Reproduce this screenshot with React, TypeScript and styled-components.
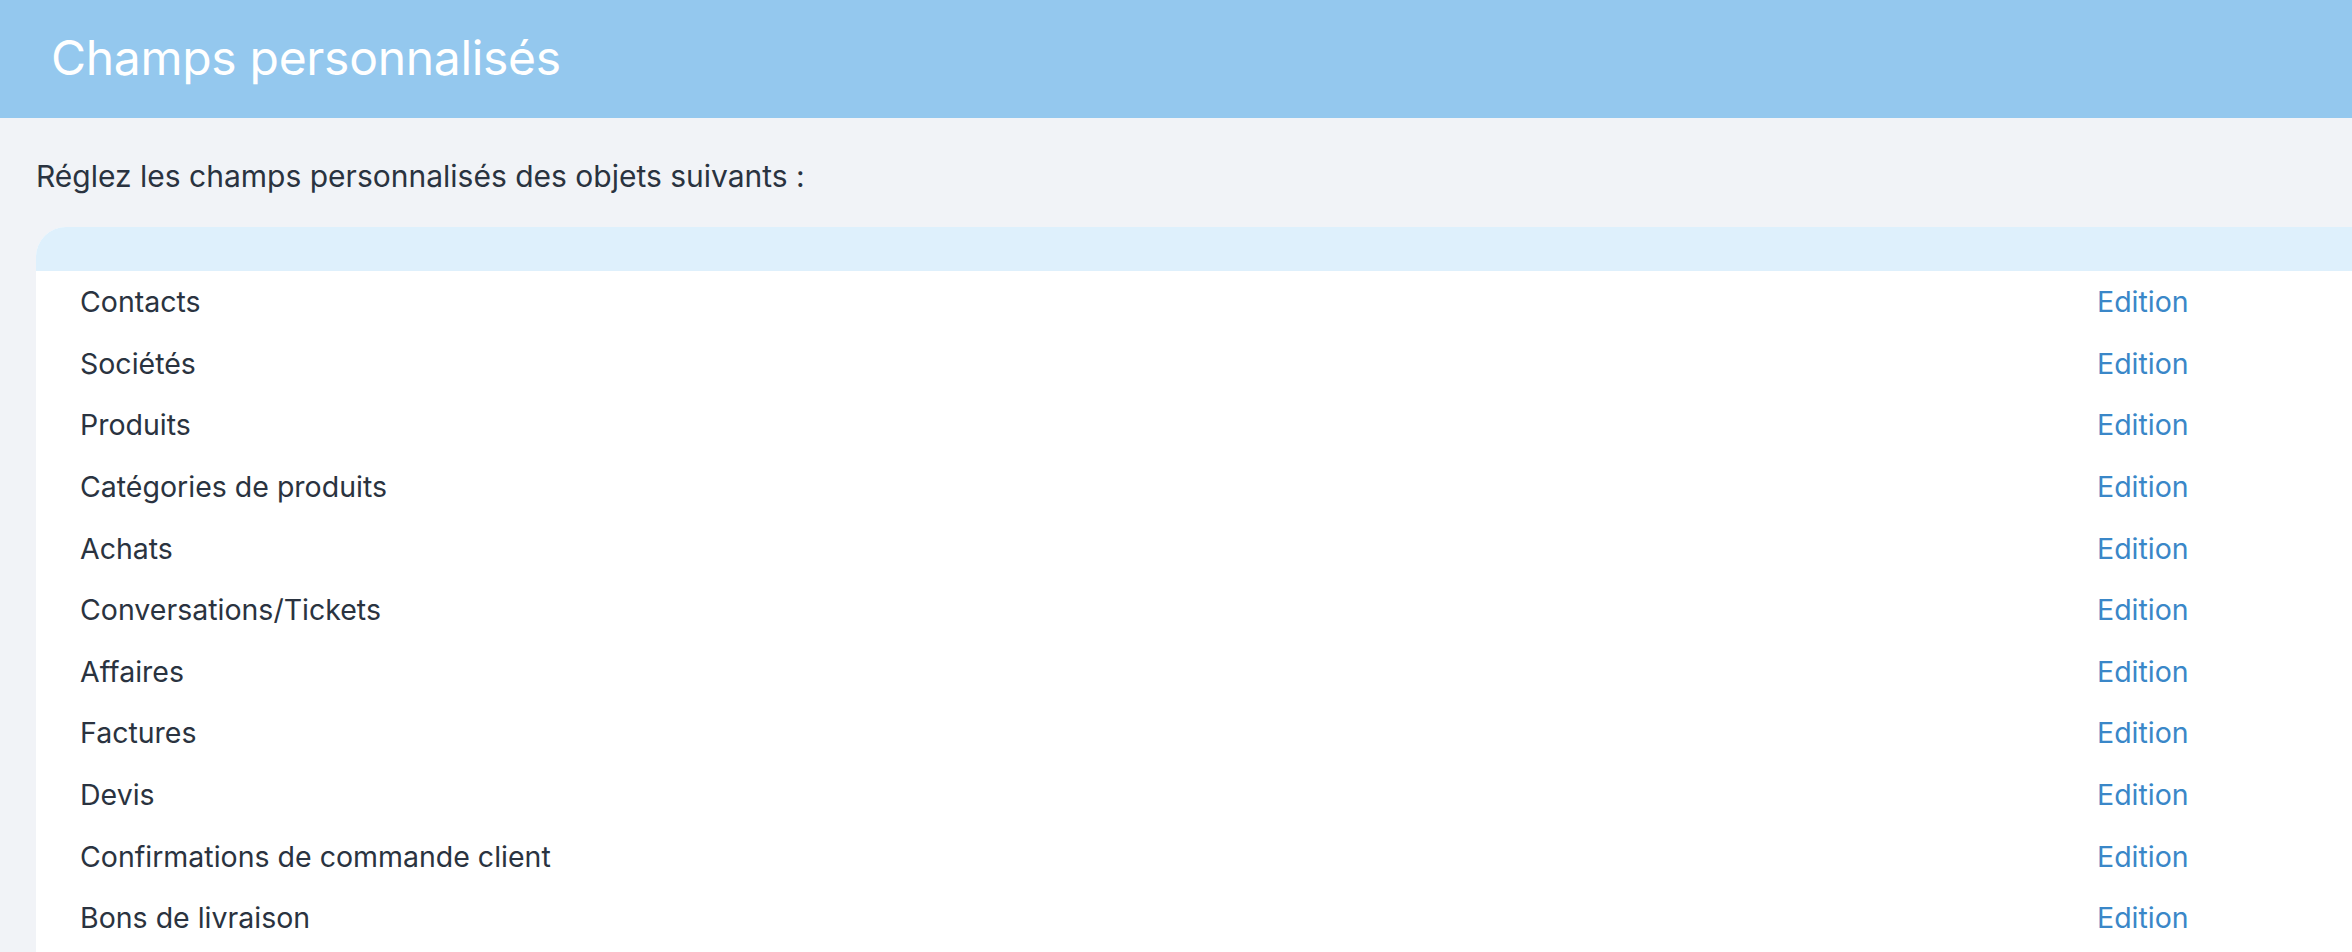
import React from "react";
import styled, { createGlobalStyle } from "styled-components";

const GlobalStyle = createGlobalStyle`
  html, body {
    margin: 0;
    padding: 0;
    background: #f1f3f7;
    overflow: hidden;
  }
  body {
    font-family: Inter, "Noto Sans", "Liberation Sans", sans-serif;
  }
`;

const Page = styled.div`
  display: flex;
  flex-direction: column;
  width: 2352px;
  height: 952px;
  background: #f1f3f7;
`;

const Header = styled.header`
  flex: none;
  height: 118px;
  background: #94c8ee;
  display: flex;
  align-items: center;
  padding-left: 51px;
  padding-bottom: 4px;
  box-sizing: border-box;
`;

const Title = styled.h1`
  margin: 0;
  font-size: 48px;
  font-weight: 400;
  color: #ffffff;
  letter-spacing: -0.3px;
`;

const Content = styled.main`
  flex: 1;
  display: flex;
  flex-direction: column;
  padding: 0 0 0 36px;
`;

const Intro = styled.p`
  flex: none;
  margin: 0;
  height: 109px;
  display: flex;
  align-items: center;
  font-size: 30px;
  color: #2a3340;
  padding-top: 6px;
  box-sizing: border-box;
`;

const Table = styled.div`
  flex: 1;
  width: 2400px;
  background: #ffffff;
  border-top-left-radius: 30px;
  overflow: hidden;
`;

const TableHead = styled.div`
  height: 44px;
  background: #def0fc;
`;

const Row = styled.div`
  display: grid;
  grid-template-columns: 2061px 1fr;
  align-items: center;
  height: 61.6px;
  font-size: 28.5px;
`;

const Name = styled.span`
  padding-left: 44px;
  color: #2a3340;
`;

const EditLink = styled.a`
  color: #3a87c8;
  text-decoration: none;
  cursor: pointer;
`;

const items = [
  "Contacts",
  "Sociétés",
  "Produits",
  "Catégories de produits",
  "Achats",
  "Conversations/Tickets",
  "Affaires",
  "Factures",
  "Devis",
  "Confirmations de commande client",
  "Bons de livraison",
];

export default function App() {
  return (
    <>
      <GlobalStyle />
      <Page>
        <Header>
          <Title>Champs personnalisés</Title>
        </Header>
        <Content>
          <Intro>Réglez les champs personnalisés des objets suivants :</Intro>
          <Table>
            <TableHead />
            {items.map((it) => (
              <Row key={it}>
                <Name>{it}</Name>
                <EditLink>Edition</EditLink>
              </Row>
            ))}
          </Table>
        </Content>
      </Page>
    </>
  );
}
